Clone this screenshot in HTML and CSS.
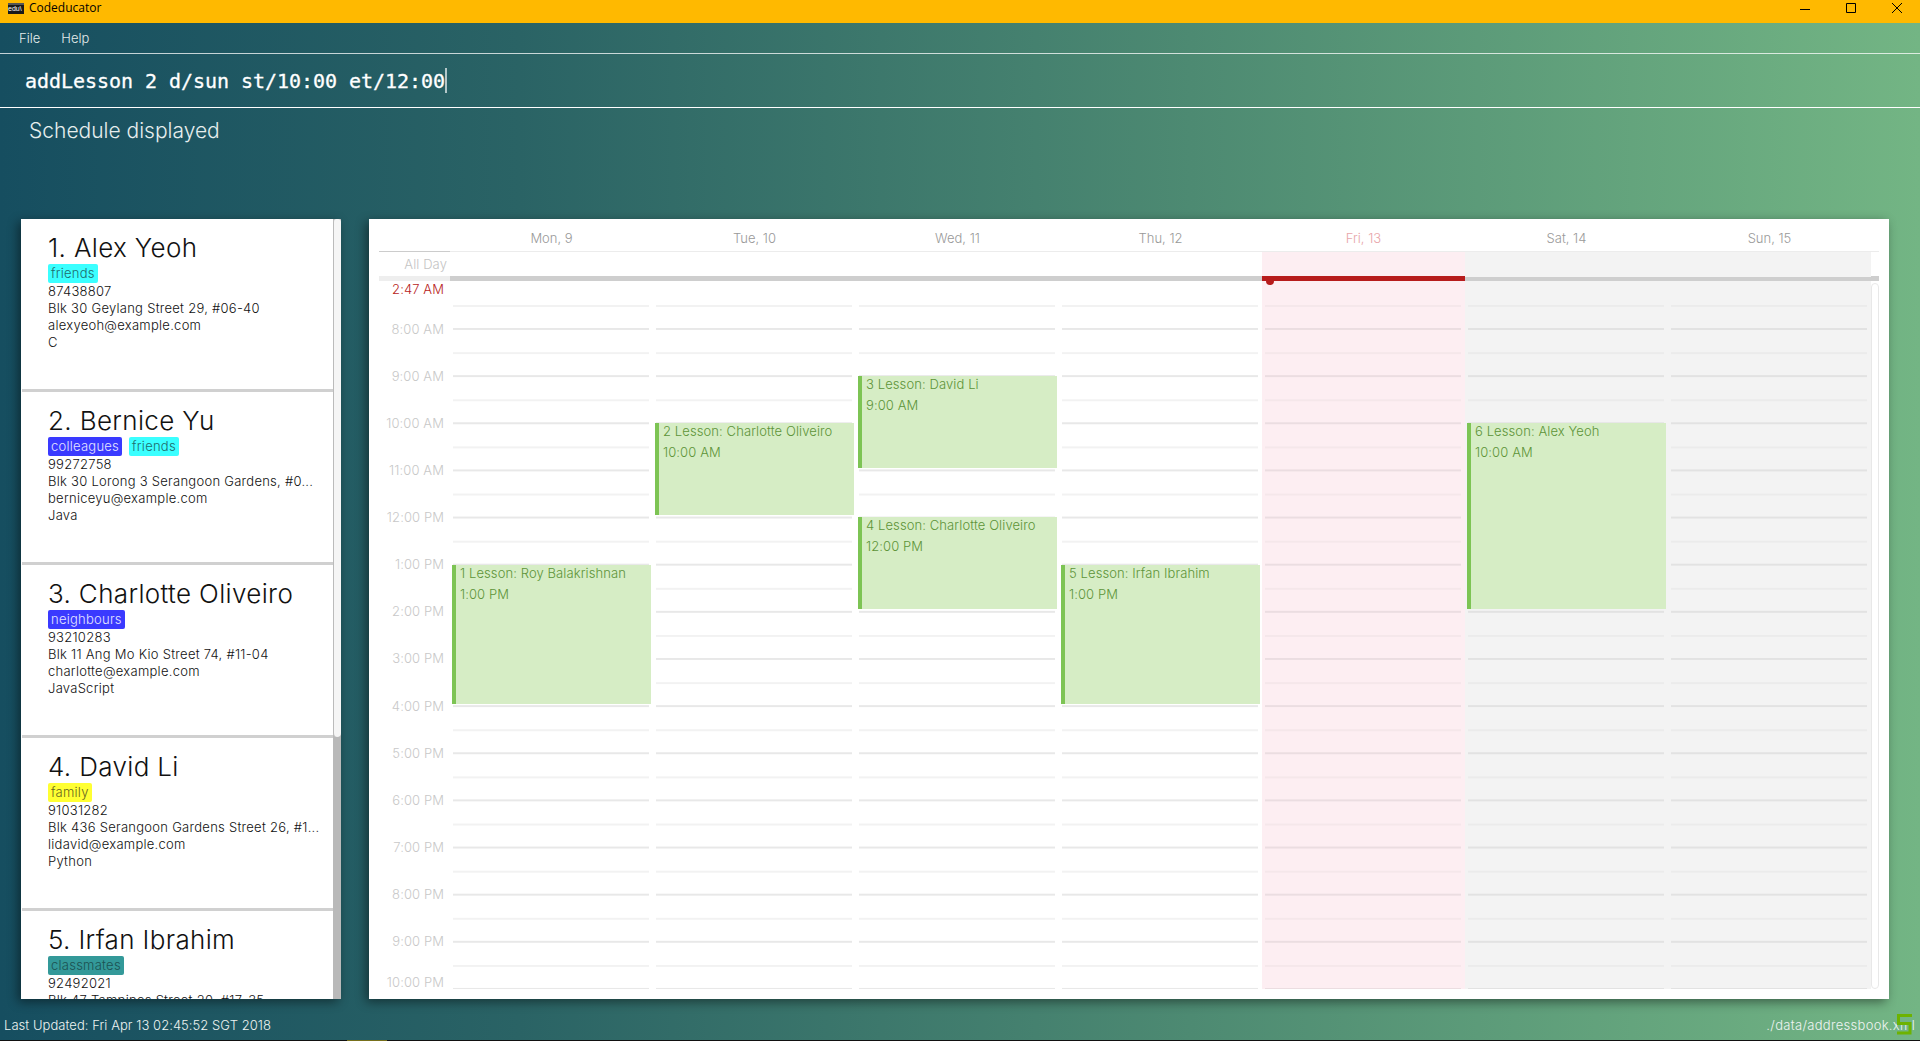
FILE: index.html
```html
<!DOCTYPE html>
<html lang="en">

<head>
    <meta charset="UTF-8">
    <title>Codeducator</title>
    <link rel="stylesheet" href="styles.css">
</head>

<body>
    <div class="titlebar">
        <div class="app-icon"><span class="app-icon-text">edu\</span></div>
        <span class="app-name">Codeducator</span>
        <div class="win-controls">
            <svg width="12" height="12" viewBox="0 0 12 12"><path d="M1 7.5H11" stroke="#000" fill="none"/></svg>
            <svg width="12" height="12" viewBox="0 0 12 12"><path d="M1.5 1.5H10.5V10.5H1.5Z" stroke="#000" fill="none"/></svg>
            <svg width="12" height="12" viewBox="0 0 12 12"><path d="M1 1L11 11M11 1L1 11" stroke="#000" fill="none"/></svg>
        </div>
    </div>

    <div class="menubar">
        <span>File</span>
        <span>Help</span>
    </div>

    <div class="command-box">addLesson 2 d/sun st/10:00 et/12:00<span class="caret"></span></div>

    <div class="result-box">Schedule displayed</div>

    <div class="main">
        <div class="person-panel">
            <div class="person-list">
                <div class="card">
                    <div class="card-name">1. Alex Yeoh</div>
                    <div class="tags"><span class="tag tag-cyan">friends</span></div>
                    <div class="card-line">87438807</div>
                    <div class="card-line">Blk 30 Geylang Street 29, #06-40</div>
                    <div class="card-line">alexyeoh@example.com</div>
                    <div class="card-line">C</div>
                </div>
                <div class="card">
                    <div class="card-name">2. Bernice Yu</div>
                    <div class="tags"><span class="tag tag-blue">colleagues</span><span class="tag tag-cyan">friends</span></div>
                    <div class="card-line">99272758</div>
                    <div class="card-line">Blk 30 Lorong 3 Serangoon Gardens, #0...</div>
                    <div class="card-line">berniceyu@example.com</div>
                    <div class="card-line">Java</div>
                </div>
                <div class="card">
                    <div class="card-name">3. Charlotte Oliveiro</div>
                    <div class="tags"><span class="tag tag-blue">neighbours</span></div>
                    <div class="card-line">93210283</div>
                    <div class="card-line">Blk 11 Ang Mo Kio Street 74, #11-04</div>
                    <div class="card-line">charlotte@example.com</div>
                    <div class="card-line">JavaScript</div>
                </div>
                <div class="card">
                    <div class="card-name">4. David Li</div>
                    <div class="tags"><span class="tag tag-yellow">family</span></div>
                    <div class="card-line">91031282</div>
                    <div class="card-line">Blk 436 Serangoon Gardens Street 26, #1...</div>
                    <div class="card-line">lidavid@example.com</div>
                    <div class="card-line">Python</div>
                </div>
                <div class="card">
                    <div class="card-name">5. Irfan Ibrahim</div>
                    <div class="tags"><span class="tag tag-teal">classmates</span></div>
                    <div class="card-line">92492021</div>
                    <div class="card-line">Blk 47 Tampines Street 20, #17-35</div>
                </div>
            </div>
            <div class="list-scroll"><div class="list-thumb"></div></div>
        </div>

        <div class="calendar-panel">
            <div class="cal-head">
                <div class="cal-corner"></div>
                <div class="cal-day">Mon, 9</div>
                <div class="cal-day">Tue, 10</div>
                <div class="cal-day">Wed, 11</div>
                <div class="cal-day">Thu, 12</div>
                <div class="cal-day cal-today">Fri, 13</div>
                <div class="cal-day">Sat, 14</div>
                <div class="cal-day">Sun, 15</div>
            </div>
            <div class="cal-allday">
                <div class="allday-label">All Day</div>
                <div></div>
                <div></div>
                <div></div>
                <div></div>
                <div class="col-today"></div>
                <div class="col-weekend"></div>
                <div class="col-weekend"></div>
            </div>
            <div class="cal-bar">
                <div class="bar-corner"></div>
                <div class="bar-today-space"></div>
                <div class="bar-today"></div>
            </div>
            <div class="cal-body">
                <div class="time-col">
                    <div class="time-now">2:47 AM</div>
                    <div class="time">8:00 AM</div>
                    <div class="time">9:00 AM</div>
                    <div class="time">10:00 AM</div>
                    <div class="time">11:00 AM</div>
                    <div class="time">12:00 PM</div>
                    <div class="time">1:00 PM</div>
                    <div class="time">2:00 PM</div>
                    <div class="time">3:00 PM</div>
                    <div class="time">4:00 PM</div>
                    <div class="time">5:00 PM</div>
                    <div class="time">6:00 PM</div>
                    <div class="time">7:00 PM</div>
                    <div class="time">8:00 PM</div>
                    <div class="time">9:00 PM</div>
                    <div class="time time-last">10:00 PM</div>
                </div>
                <div class="day-col">
                    <div class="event event-1pm event-3h">
                        <div>1 Lesson: Roy Balakrishnan</div>
                        <div class="event-time">1:00 PM</div>
                    </div>
                </div>
                <div class="day-col">
                    <div class="event event-10am event-2h">
                        <div>2 Lesson: Charlotte Oliveiro</div>
                        <div class="event-time">10:00 AM</div>
                    </div>
                </div>
                <div class="day-col">
                    <div class="event event-9am event-2h">
                        <div>3 Lesson: David Li</div>
                        <div class="event-time">9:00 AM</div>
                    </div>
                    <div class="event event-12pm event-2h">
                        <div>4 Lesson: Charlotte Oliveiro</div>
                        <div class="event-time">12:00 PM</div>
                    </div>
                </div>
                <div class="day-col">
                    <div class="event event-1pm event-3h">
                        <div>5 Lesson: Irfan Ibrahim</div>
                        <div class="event-time">1:00 PM</div>
                    </div>
                </div>
                <div class="day-col col-today">
                    <div class="now-dot"></div>
                </div>
                <div class="day-col col-weekend">
                    <div class="event event-10am event-4h">
                        <div>6 Lesson: Alex Yeoh</div>
                        <div class="event-time">10:00 AM</div>
                    </div>
                </div>
                <div class="day-col col-weekend"></div>
                <div class="cal-scroll"></div>
            </div>
        </div>
    </div>

    <div class="statusbar">
        <span>Last Updated: Fri Apr 13 02:45:52 SGT 2018</span>
        <span class="status-file">./data/addressbook.xml</span>
        <svg class="status-logo" width="15" height="21" viewBox="0 0 15 21"><path d="M15 1.5H1.5V9.5H13V19H0" stroke="#6db300" stroke-width="3" fill="none"/></svg>
    </div>
    <div class="taskbar-edge"><div class="taskbar-mark"></div></div>
</body>

</html>
```
FILE: styles.css
```css
* {
    box-sizing: border-box;
}

body {
    margin: 0;
    height: 1041px;
    overflow: hidden;
    display: flex;
    flex-direction: column;
    font-family: Inter, "Open Sans", sans-serif;
    background: linear-gradient(90deg, #164e60 0%, #2a6365 27%, #4d8a72 62%, #73b584 100%);
}

.titlebar {
    height: 23px;
    flex: none;
    display: flex;
    align-items: center;
    padding-left: 8px;
    background: #ffb900;
}

.app-icon {
    width: 16px;
    height: 11px;
    margin-top: -7px;
    margin-right: 5px;
    background: #1a1a1a;
    border-top: 2px solid #555;
    overflow: hidden;
}

.app-icon-text {
    display: block;
    color: #fff;
    font: 7px/8px "Liberation Sans", sans-serif;
}

.app-name {
    margin-top: -8px;
    font: 12px "Open Sans", sans-serif;
    color: #000;
}

.win-controls {
    margin-left: auto;
    margin-top: -8px;
    margin-right: 17px;
    display: flex;
    gap: 34px;
}

.menubar {
    height: 31px;
    flex: none;
    display: flex;
    align-items: center;
    gap: 21px;
    padding-left: 19px;
    font-size: 13px;
    font-weight: 300;
    color: #e4ecec;
    border-bottom: 1px solid rgba(255, 255, 255, .75);
}

.command-box {
    height: 54px;
    flex: none;
    display: flex;
    align-items: center;
    padding-left: 25px;
    font: 20px "DejaVu Sans Mono", "Liberation Mono", monospace;
    letter-spacing: -.04px;
    -webkit-text-stroke: .3px #fff;
    color: #fff;
    border-bottom: 1px solid #fff;
}

.caret {
    width: 2px;
    height: 25px;
    background: rgba(255, 255, 255, .65);
}

.result-box {
    height: 111px;
    flex: none;
    padding: 10px 0 0 29px;
    font-size: 21px;
    font-weight: 300;
    color: #e6eeee;
}

.main {
    height: 780px;
    flex: none;
    display: flex;
    gap: 28px;
    padding-left: 21px;
}

.person-panel {
    width: 320px;
    display: flex;
    background: #fff;
    overflow: hidden;
    box-shadow: -3px 3px 10px rgba(0, 0, 0, .45);
}

.person-list {
    width: 312px;
    padding-left: 1px;
}

.card {
    height: 173px;
    padding: 11px 0 0 26px;
    border-bottom: 3px solid #d0d0d0;
    color: #111;
}

.card-name {
    font-size: 26px;
    line-height: 36px;
    font-weight: 300;
    letter-spacing: .35px;
    white-space: nowrap;
}

.tags {
    display: flex;
    gap: 7px;
    height: 19px;
    margin-top: -2px;
}

.tag {
    height: 19px;
    padding: 0 3px;
    border-radius: 2px;
    font-size: 13px;
    line-height: 19px;
    font-weight: 300;
    letter-spacing: .25px;
}

.tag-cyan {
    background: #3bffff;
    color: #1f6b6b;
}

.tag-blue {
    background: #3a3aff;
    color: #e4e4ff;
}

.tag-yellow {
    background: #ffff33;
    color: #66661f;
}

.tag-teal {
    background: #339999;
    color: #1c5252;
}

.card-line {
    font-size: 13px;
    line-height: 17px;
    font-weight: 300;
    letter-spacing: .27px;
    white-space: nowrap;
}

.list-scroll {
    width: 8px;
    background: #b9b9b9;
}

.list-thumb {
    height: 518px;
    background: #f5f5f5;
    border-left: 1px solid #bbb;
    border-radius: 3px 3px 4px 4px;
}

.calendar-panel {
    width: 1520px;
    padding: 0 10px;
    background: #fff;
    box-shadow: -3px 3px 10px rgba(0, 0, 0, .45);
}

.cal-head,
.cal-allday {
    display: grid;
    grid-template-columns: 71px repeat(7, 203px) 8px;
}

.cal-head {
    height: 33px;
    border-bottom: 1px solid #ececec;
}

.cal-corner {
    height: 33px;
    border-bottom: 1px solid #ccc;
}

.cal-day {
    font-size: 13px;
    font-weight: 300;
    line-height: 38px;
    text-align: center;
    color: #999;
}

.cal-today {
    color: #e8a5a9;
}

.cal-allday {
    height: 24px;
}

.allday-label {
    padding-right: 3px;
    text-align: right;
    font-size: 13px;
    font-weight: 300;
    line-height: 25px;
    letter-spacing: .1px;
    color: #c4c4c4;
}

.cal-bar {
    height: 5px;
    display: flex;
    background: #cecece;
}

.bar-corner {
    width: 71px;
    background: #eee;
}

.bar-today-space {
    width: 812px;
}

.bar-today {
    width: 203px;
    background: #b71c1c;
}

.cal-body {
    height: 708px;
    display: flex;
    overflow: hidden;
}

.time-col {
    position: relative;
    width: 71px;
    flex: none;
    padding: 24.5px 6px 0 0;
    text-align: right;
    font-size: 13px;
    font-weight: 300;
    letter-spacing: .1px;
    color: #c8c8c8;
}

.time {
    height: 47.15px;
    line-height: 47.15px;
}

.time-last {
    margin-top: -6px;
}

.time-now {
    position: absolute;
    top: 0;
    right: 6px;
    line-height: 17px;
    color: #b71c1c;
}

.day-col {
    position: relative;
    width: 203px;
    flex: none;
}

.day-col::before {
    content: "";
    position: absolute;
    top: 24px;
    bottom: 0;
    left: 3px;
    right: 4px;
    background-image:
        linear-gradient(rgba(0, 0, 0, .09) 2px, transparent 2px),
        linear-gradient(rgba(0, 0, 0, .05) 2px, transparent 2px);
    background-size: 100% 47.15px;
    background-position: 0 23px, 0 0;
}

.col-today::before,
.col-weekend::before {
    background-image:
        linear-gradient(rgba(0, 0, 0, .07) 2px, transparent 2px),
        linear-gradient(rgba(0, 0, 0, .03) 2px, transparent 2px);
}

.col-today {
    background: #fdeef2;
}

.col-weekend {
    background: #f3f3f3;
}

.now-dot {
    position: absolute;
    top: -4px;
    left: 4px;
    width: 8px;
    height: 8px;
    border-radius: 50%;
    background: #b71c1c;
}

.event {
    position: absolute;
    left: 2px;
    width: 199px;
    padding: 0 0 0 4px;
    border-left: 4px solid #7dc454;
    background: #d6edc5;
    font-size: 13px;
    font-weight: 300;
    line-height: 16px;
    letter-spacing: .1px;
    color: #5d9438;
    white-space: nowrap;
    overflow: hidden;
}

.event-time {
    margin-top: 5px;
}

.event-9am {
    top: 95px;
}

.event-10am {
    top: 142px;
}

.event-12pm {
    top: 236px;
}

.event-1pm {
    top: 284px;
}

.event-2h {
    height: 92px;
}

.event-3h {
    height: 139px;
}

.event-4h {
    height: 186px;
}

.cal-scroll {
    width: 8px;
    border: 1px solid #e8e8e8;
    border-radius: 4px;
    margin-top: 2px;
}

.statusbar {
    height: 41px;
    flex: none;
    position: relative;
    display: flex;
    justify-content: space-between;
    align-items: center;
    padding: 10px 5px 0 4px;
    font-size: 13px;
    font-weight: 300;
    letter-spacing: .05px;
    color: #eef4f2;
}

.status-file {
    letter-spacing: .3px;
}

.status-logo {
    position: absolute;
    top: 15px;
    right: 8px;
}

.taskbar-edge {
    height: 1px;
    flex: none;
    background: #111;
}

.taskbar-mark {
    width: 40px;
    height: 1px;
    margin-left: 347px;
    background: #77701c;
}
```
